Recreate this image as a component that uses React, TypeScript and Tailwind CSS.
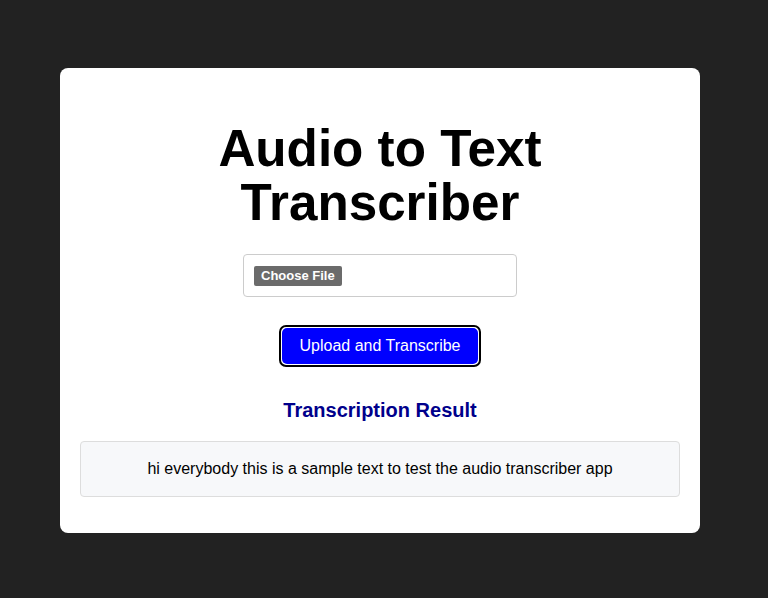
export default function App() {
  return (
    <div
      className="min-h-[598px] w-full bg-[#222222] pt-[68px]"
      style={{ fontFamily: '"Liberation Sans", Arial, sans-serif' }}
    >
      <div className="ml-[60px] flex w-[640px] flex-col items-center rounded-[8px] bg-white px-[20px] pt-[54px] pb-[36px]">
        <h1 className="m-0 text-center text-[51.2px] font-bold leading-[54px] text-black">
          Audio to Text
          <br />
          Transcriber
        </h1>
        <div className="mt-[24px] flex h-[43px] w-[274px] items-center rounded-[4px] border border-[#cccccc] px-[10px]">
          <span className="flex h-[20px] items-center rounded-[2px] bg-[#6b6b6b] px-[7px] pt-[1px] text-[13px] font-bold text-white">
            Choose File
          </span>
        </div>
        <div className="mt-[28px] rounded-[7px] border-2 border-black bg-white p-[1px]">
          <div className="flex h-[36px] w-[196px] items-center justify-center rounded-[5px] bg-[#0000ff] text-[16px] text-white">
            Upload and Transcribe
          </div>
        </div>
        <h2 className="mt-[32px] text-[20px] font-bold leading-[23px] text-[#00008b]">
          Transcription Result
        </h2>
        <div className="mt-[19px] flex h-[56px] w-full items-center justify-center rounded-[4px] border border-[#dddddd] bg-[#f7f8fa] text-[16px] text-black">
          hi everybody this is a sample text to test the audio transcriber app
        </div>
      </div>
    </div>
  );
}
